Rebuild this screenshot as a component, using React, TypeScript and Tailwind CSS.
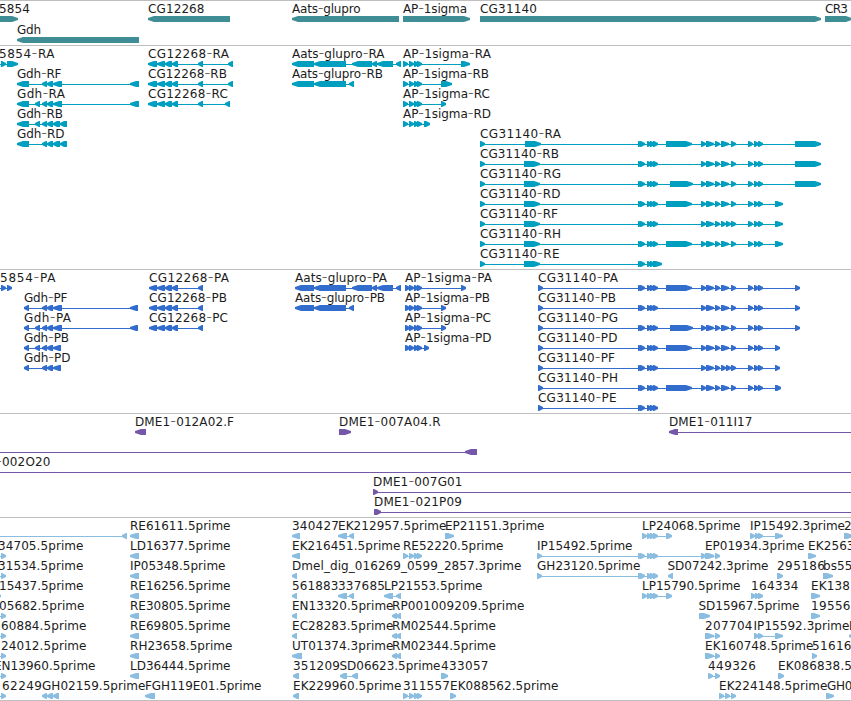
type Dir = 'l' | 'r';
type Span = [number, number];

interface Feature {
  text?: string;
  x: number;
  end: number;
  dir: Dir;
  exons: Span[];
  line?: Span;
}

interface Track {
  name: string;
  fill: string;
  pad: string;
  rowHeight: number;
  rows: Feature[][];
}

const f = (text: string, x: number, end: number, dir: Dir, exons: Span[], line?: Span): Feature => ({
  text,
  x,
  end,
  dir,
  exons,
  line,
});

const bar = (dir: Dir, exons: Span[], line?: Span): Feature => ({ x: 0, end: 0, dir, exons, line });

// Exon groups shared by several transcripts
const GDH_A: Span[] = [[42, 47], [47, 53], [53, 62]];
const CG12: Span[] = [[157, 165], [165, 172], [172, 178], [198, 203]];
const AATS: Span[] = [[314, 346], [352, 372], [372, 377], [377, 393], [396, 401]];
const AATS_B: Span[] = [[314, 346], [349, 354]];
const AP: Span[] = [[403, 408], [409, 414], [414, 419], [417, 422]];
const AP_P: Span[] = [[405, 410], [409, 414], [414, 419], [417, 422]];
const PAIR: Span[] = [[638, 643], [640, 645]];
const TRIO: Span[] = [[647, 652], [650, 655], [653, 658]];
const MID: Span[] = [[701, 706], [706, 714], [715, 720], [721, 729], [731, 736]];
const MID_F: Span[] = [[701, 706], [706, 714], [715, 720], [721, 726], [726, 731], [731, 736]];
const TAIL: Span[] = [[748, 753], [754, 759], [758, 763]];
const BIG: Span = [666, 692];
const BIG_G: Span = [670, 693];

const genes: Feature[][] = [
  [
    f('5854', -1, 30.5, 'r', [[-9, 18]]),
    f('CG12268', 148, 205, 'l', [[148, 230]]),
    f('Aats-glupro', 292, 361, 'l', [[292, 399]]),
    f('AP-1sigma', 403, 467.5, 'r', [[403, 470]]),
    f('CG31140', 480, 537.5, 'r', [[480, 821]]),
    f('CR3', 825, 848.5, 'r', [[825, 852]]),
  ],
  [f('Gdh', 17, 41.5, 'l', [[17, 139]])],
];

const transcripts: Feature[][] = [
  [
    f('5854-RA', -1, 55, 'r', [[1, 6], [7, 18]], [0, 18]),
    f('CG12268-RA', 148, 229.5, 'l', [[148, 157], ...CG12, [228, 233]]),
    f('Aats-glupro-RA', 292, 385, 'l', [[292, 314], ...AATS]),
    f('AP-1sigma-RA', 403, 491.5, 'r', [...AP, [461, 470]]),
  ],
  [
    f('Gdh-RF', 17, 62, 'l', [[17, 29], ...GDH_A, [130, 139]]),
    f('CG12268-RB', 148, 227.5, 'l', [[148, 157], ...CG12, [228, 233]]),
    f('Aats-glupro-RB', 292, 383.5, 'l', [[292, 314], ...AATS_B]),
    f('AP-1sigma-RB', 403, 489.5, 'r', [...AP, [441, 452]]),
  ],
  [
    f('Gdh-RA', 17, 65.5, 'l', [[17, 29], [35, 40], ...GDH_A, [130, 139]]),
    f('CG12268-RC', 148, 228.5, 'l', [[148, 157], ...CG12, [225, 230]]),
    f('AP-1sigma-RC', 403, 490.5, 'r', [...AP, [441, 446]]),
  ],
  [
    f('Gdh-RB', 17, 63.5, 'l', [[17, 29], [35, 40], [42, 47], [47, 53], [53, 60], [60, 67]]),
    f('AP-1sigma-RD', 403, 491.5, 'r', [...AP, [424, 430]]),
  ],
  [
    f('Gdh-RD', 17, 65, 'l', [[17, 29], [42, 47], [47, 53], [53, 60], [60, 67]]),
    f('CG31140-RA', 480, 561.5, 'r', [[480, 485], [525, 541], ...PAIR, ...TRIO, BIG, ...MID, ...TAIL, [795, 821]]),
  ],
  [f('CG31140-RB', 480, 559.5, 'r', [[480, 485], [524, 540], ...PAIR, ...TRIO, ...MID, ...TAIL, [795, 821]])],
  [f('CG31140-RG', 480, 561.5, 'r', [[480, 485], [524, 540], ...PAIR, ...TRIO, BIG_G, ...MID, ...TAIL, [795, 821]])],
  [f('CG31140-RD', 480, 561, 'r', [[480, 485], [524, 540], ...PAIR, ...TRIO, BIG, ...MID, ...TAIL, [775, 783]])],
  [f('CG31140-RF', 480, 558.5, 'r', [[480, 485], [524, 540], ...PAIR, ...TRIO, ...MID_F, ...TAIL, [775, 783]])],
  [f('CG31140-RH', 480, 561.5, 'r', [[480, 485], [524, 540], ...PAIR, ...TRIO, BIG, ...MID, ...TAIL, [775, 783]])],
  [f('CG31140-RE', 480, 560, 'r', [[480, 485], [524, 540], ...PAIR, [647, 652], [650, 655], [653, 662]])],
];

const proteins: Feature[][] = [
  [
    f('5854-PA', 0, 56, 'r', [[1, 6], [7, 12]], [0, 12]),
    f('CG12268-PA', 149, 229.5, 'l', [[149, 157], ...CG12]),
    f('Aats-glupro-PA', 295, 387.5, 'l', [[295, 314], ...AATS]),
    f('AP-1sigma-PA', 405, 492.5, 'r', [...AP_P, [461, 466]]),
    f('CG31140-PA', 538, 618.5, 'r', [[538, 543], ...PAIR, ...TRIO, BIG, ...MID, ...TAIL, [795, 800]]),
  ],
  [
    f('Gdh-PF', 24, 68, 'l', [[24, 29], ...GDH_A, [130, 138]]),
    f('CG12268-PB', 149, 227.5, 'l', [[149, 157], ...CG12]),
    f('Aats-glupro-PB', 295, 385.5, 'l', [[295, 314], ...AATS_B]),
    f('AP-1sigma-PB', 405, 490.5, 'r', [...AP_P, [441, 446]]),
    f('CG31140-PB', 538, 616.5, 'r', [[538, 543], ...PAIR, ...TRIO, ...MID, ...TAIL, [795, 800]]),
  ],
  [
    f('Gdh-PA', 24, 71.5, 'l', [[24, 29], [35, 40], ...GDH_A, [130, 138]]),
    f('CG12268-PC', 149, 228.5, 'l', [[149, 157], ...CG12]),
    f('AP-1sigma-PC', 405, 491.5, 'r', [...AP_P, [441, 446]]),
    f('CG31140-PG', 538, 618.5, 'r', [[538, 543], ...PAIR, ...TRIO, BIG_G, ...MID, ...TAIL, [795, 800]]),
  ],
  [
    f('Gdh-PB', 24, 69.5, 'l', [[24, 29], [35, 40], [42, 47], [47, 53], [53, 61]]),
    f('AP-1sigma-PD', 405, 492, 'r', [...AP_P, [424, 429]]),
    f('CG31140-PD', 538, 618, 'r', [[538, 543], ...PAIR, ...TRIO, BIG, ...MID, ...TAIL, [775, 780]]),
  ],
  [
    f('Gdh-PD', 24, 71, 'l', [[24, 29], [42, 47], [47, 53], [53, 61]]),
    f('CG31140-PF', 538, 615.5, 'r', [[538, 543], ...PAIR, ...TRIO, ...MID_F, ...TAIL, [775, 780]]),
  ],
  [f('CG31140-PH', 538, 618.5, 'r', [[538, 543], ...PAIR, ...TRIO, BIG, ...MID, ...TAIL, [775, 781]])],
  [f('CG31140-PE', 538, 617, 'r', [[538, 543], ...PAIR, ...TRIO])],
];

const clones: Feature[][] = [
  [
    f('DME1-012A02.F', 135, 234.5, 'l', [[135, 146]]),
    f('DME1-007A04.R', 339, 441, 'r', [[339, 351]]),
    f('DME1-011I17', 669, 753, 'l', [[669, 678]], [669, 851]),
  ],
  [bar('l', [[465, 477]], [0, 477])],
  [f('-002O20', -4, 51, 'r', [], [0, 851])],
  [f('DME1-007G01', 373, 463, 'r', [[373, 378]], [373, 851])],
  [f('DME1-021P09', 374, 462.5, 'r', [[374, 381]], [374, 851])],
];

const LP: Span[] = [[642, 647], ...TRIO, [666, 672]];
const RM: Span[] = [[392, 397], [396, 401]];

const ests: Feature[][] = [
  [
    bar('l', [[122, 127]], [0, 127]),
    f('RE61611.5prime', 130, 231, 'l', [[130, 139]]),
    f('340427', 292, 339.5, 'l', [[292, 300]]),
    f('EK212957.5prime', 338, 447, 'l', [[338, 347], [349, 354]]),
    f('EP21151.3prime', 445, 545, 'r', [[445, 454]]),
    f('LP24068.5prime', 642, 741, 'r', LP),
    f('IP15492.3prime', 750, 845.5, 'r', [[750, 755], [755, 760], [758, 763], [775, 783]]),
    f('2', 844, 851.6, 'r', [[844, 853]]),
  ],
  [
    f('34705.5prime', -2, 84, 'r', [[1, 6]], [0, 6]),
    f('LD16377.5prime', 130, 231, 'l', [[130, 139]]),
    f('EK216451.5prime', 292, 401, 'l', [[292, 300]]),
    f('RE52220.5prime', 403, 504, 'r', AP),
    f('IP15492.5prime', 537, 633, 'r', [[537, 542], ...PAIR, ...TRIO, [701, 706], [706, 714], [715, 720]]),
    f('EP01934.3prime', 705, 805, 'r', [[705, 714]]),
    f('EK2563', 808, 855, 'r', [[808, 816]]),
  ],
  [
    f('31534.5prime', -2, 84, 'r', [[1, 6]], [0, 6]),
    f('IP05348.5prime', 130, 226, 'l', [[130, 139]]),
    f('Dmel_dig_016269_0599_2857.3prime', 292, 522, 'l', [[292, 297]]),
    f('GH23120.5prime', 537, 641, 'r', [[537, 542], ...PAIR, ...TRIO]),
    f('SD07242.3prime', 667.5, 769, 'l', [[668, 673]]),
    f('295186', 777, 825.5, 'r', [[777, 783]]),
    f('bs55', 823, 853, 'r', [[823, 833]]),
  ],
  [
    f('15437.5prime', -1, 84, 'r', [[-4, 1]]),
    f('RE16256.5prime', 130, 231, 'l', [[130, 139]]),
    f('561883', 292, 339, 'l', [[292, 297]]),
    f('337685', 338, 385.5, 'l', [[338, 347], [349, 354]]),
    f('LP21553.5prime', 384, 483, 'l', [[384, 393], [396, 401]]),
    f('LP15790.5prime', 642, 741, 'r', LP),
    f('164334', 751, 799, 'r', [[751, 756], [755, 760], [758, 763]]),
    f('EK138', 811, 850.5, 'r', [[811, 820]]),
  ],
  [
    f('05682.5prime', -1, 85, 'r', [[1, 6]], [0, 6]),
    f('RE30805.5prime', 130, 231, 'l', [[130, 139]]),
    f('EN13320.5prime', 292, 394, 'l', [[292, 297]]),
    f('RP001009209.5prime', 392, 525, 'l', RM),
    f('SD15967.5prime', 698.5, 800, 'r', [[699, 710]]),
    f('19556', 811, 851, 'r', [[811, 820]]),
  ],
  [
    f('60884.5prime', 1, 87, 'r', [[1, 6]], [0, 6]),
    f('RE69805.5prime', 130, 231, 'l', [[130, 139]]),
    f('EC28283.5prime', 292, 394, 'l', [[292, 297]]),
    f('RM02544.5prime', 392, 496.5, 'l', RM),
    f('207704', 705, 753, 'r', [[705, 714], [715, 720]]),
    f('IP15592.3prime', 753.5, 850, 'r', [[754, 759], [758, 763], [775, 783]]),
    f('E', 849, 856.6, 'l', [[849, 854]]),
  ],
  [
    f('24012.5prime', 1, 87, 'r', [[1, 6]], [0, 6]),
    f('RH23658.5prime', 130, 233, 'l', [[130, 139]]),
    f('UT01374.3prime', 292, 394, 'l', [[292, 302]]),
    f('RM02344.5prime', 392, 496.5, 'l', RM),
    f('EK160748.5prime', 705, 814, 'r', [[705, 714], [715, 720]]),
    f('51616', 812, 852, 'r', [[812, 817]]),
  ],
  [
    f('EN13960.5prime', -6, 96, 'r', [[1, 6]], [0, 6]),
    f('LD36444.5prime', 130, 231, 'l', [[130, 139]]),
    f('351209', 293, 340.5, 'l', [[293, 299]]),
    f('SD06623.5prime', 339.5, 441, 'l', [[340, 347], [352, 358]]),
    f('433057', 441, 489, 'r', [[441, 448]]),
    f('449326', 708, 756.5, 'r', [[708, 713], [715, 720]]),
    f('EK086838.5', 778, 852.5, 'r', [[778, 784]]),
  ],
  [
    f('62249', 2, 42.5, 'r', [[1, 6]], [0, 6]),
    f('GH02159.5prime', 42, 146, 'l', [[42, 47], [47, 53], [53, 59]]),
    f('FGH119E01.5prime', 145, 262, 'l', [[145, 155]]),
    f('EK229960.5prime', 293, 402, 'l', [[293, 299]]),
    f('311557', 403, 450.5, 'r', AP),
    f('EK088562.5prime', 450, 559, 'r', [[450, 456]]),
    f('EK224148.5prime', 719, 828, 'r', [[719, 724], [725, 730], [731, 736]]),
    f('GH0', 827, 853, 'r', [[826, 834]]),
  ],
];

const tracks: Track[] = [
  { name: 'genes', fill: 'fill-[#3f8e96]', pad: 'pb-[2px]', rowHeight: 21, rows: genes },
  { name: 'transcripts', fill: 'fill-[#009fc0]', pad: 'pb-[3px]', rowHeight: 20, rows: transcripts },
  { name: 'proteins', fill: 'fill-[#326dce]', pad: 'pb-[3px]', rowHeight: 20, rows: proteins },
  { name: 'clones', fill: 'fill-[#7457a8]', pad: 'pb-[3px]', rowHeight: 20, rows: clones },
  { name: 'ests', fill: 'fill-[#8abddf]', pad: 'pb-[2px]', rowHeight: 20, rows: ests },
];

const TOP = 15;

// A block that narrows to a blunt point in the direction of its strand
function arrow([a, b]: Span, dir: Dir): string {
  const head = b - a > 7 ? 6 : 4;
  const t = TOP;
  const m = TOP + 3;
  const e = TOP + 6;
  const side = dir === 'r' ? b : a;
  const neck = dir === 'r' ? b - head : a + head;
  const back = dir === 'r' ? a : b;
  return `${back},${t} ${neck},${t} ${side},${m - 1} ${side},${m + 1} ${neck},${e} ${back},${e}`;
}

// Hyphens are drawn as long thin dashes between the name parts
function Label({ text, x, end }: { text: string; x: number; end: number }) {
  return (
    <text x={x} y={12} textLength={end - x - 0.5} className="fill-[#1c1c1c]">
      {text.split(/(-)/).map((part, i) =>
        part === '-' ? (
          <tspan key={i} className="text-[16px] font-extralight">
            -
          </tspan>
        ) : (
          part
        ),
      )}
    </text>
  );
}

function Glyph({ feature }: { feature: Feature }) {
  const { text, x, end, dir, exons, line } = feature;
  const from = line ? line[0] : exons[0][0];
  const to = line ? line[1] : exons[exons.length - 1][1];
  return (
    <g>
      <rect x={from} y={TOP + 3} width={to - from} height={1} />
      {exons.map((exon, i) => (
        <polygon key={i} points={arrow(exon, dir)} />
      ))}
      {text && <Label text={text} x={x} end={end} />}
    </g>
  );
}

function Lane({ features, fill, height }: { features: Feature[]; fill: string; height: number }) {
  return (
    <svg
      width={851}
      height={height}
      className={`block shrink-0 overflow-visible font-['DejaVu_Sans',sans-serif] text-[12px] ${fill}`}
    >
      {features.map((feature, i) => (
        <Glyph key={i} feature={feature} />
      ))}
    </svg>
  );
}

export default function App() {
  return (
    <main className="h-[701px] w-[851px] overflow-hidden border-t border-[#bfbfbf] bg-white">
      {tracks.map((track) => (
        <section key={track.name} className={`flex flex-col border-b border-[#bfbfbf] ${track.pad}`}>
          {track.rows.map((row, i) => (
            <Lane key={i} features={row} fill={track.fill} height={track.rowHeight} />
          ))}
        </section>
      ))}
    </main>
  );
}
